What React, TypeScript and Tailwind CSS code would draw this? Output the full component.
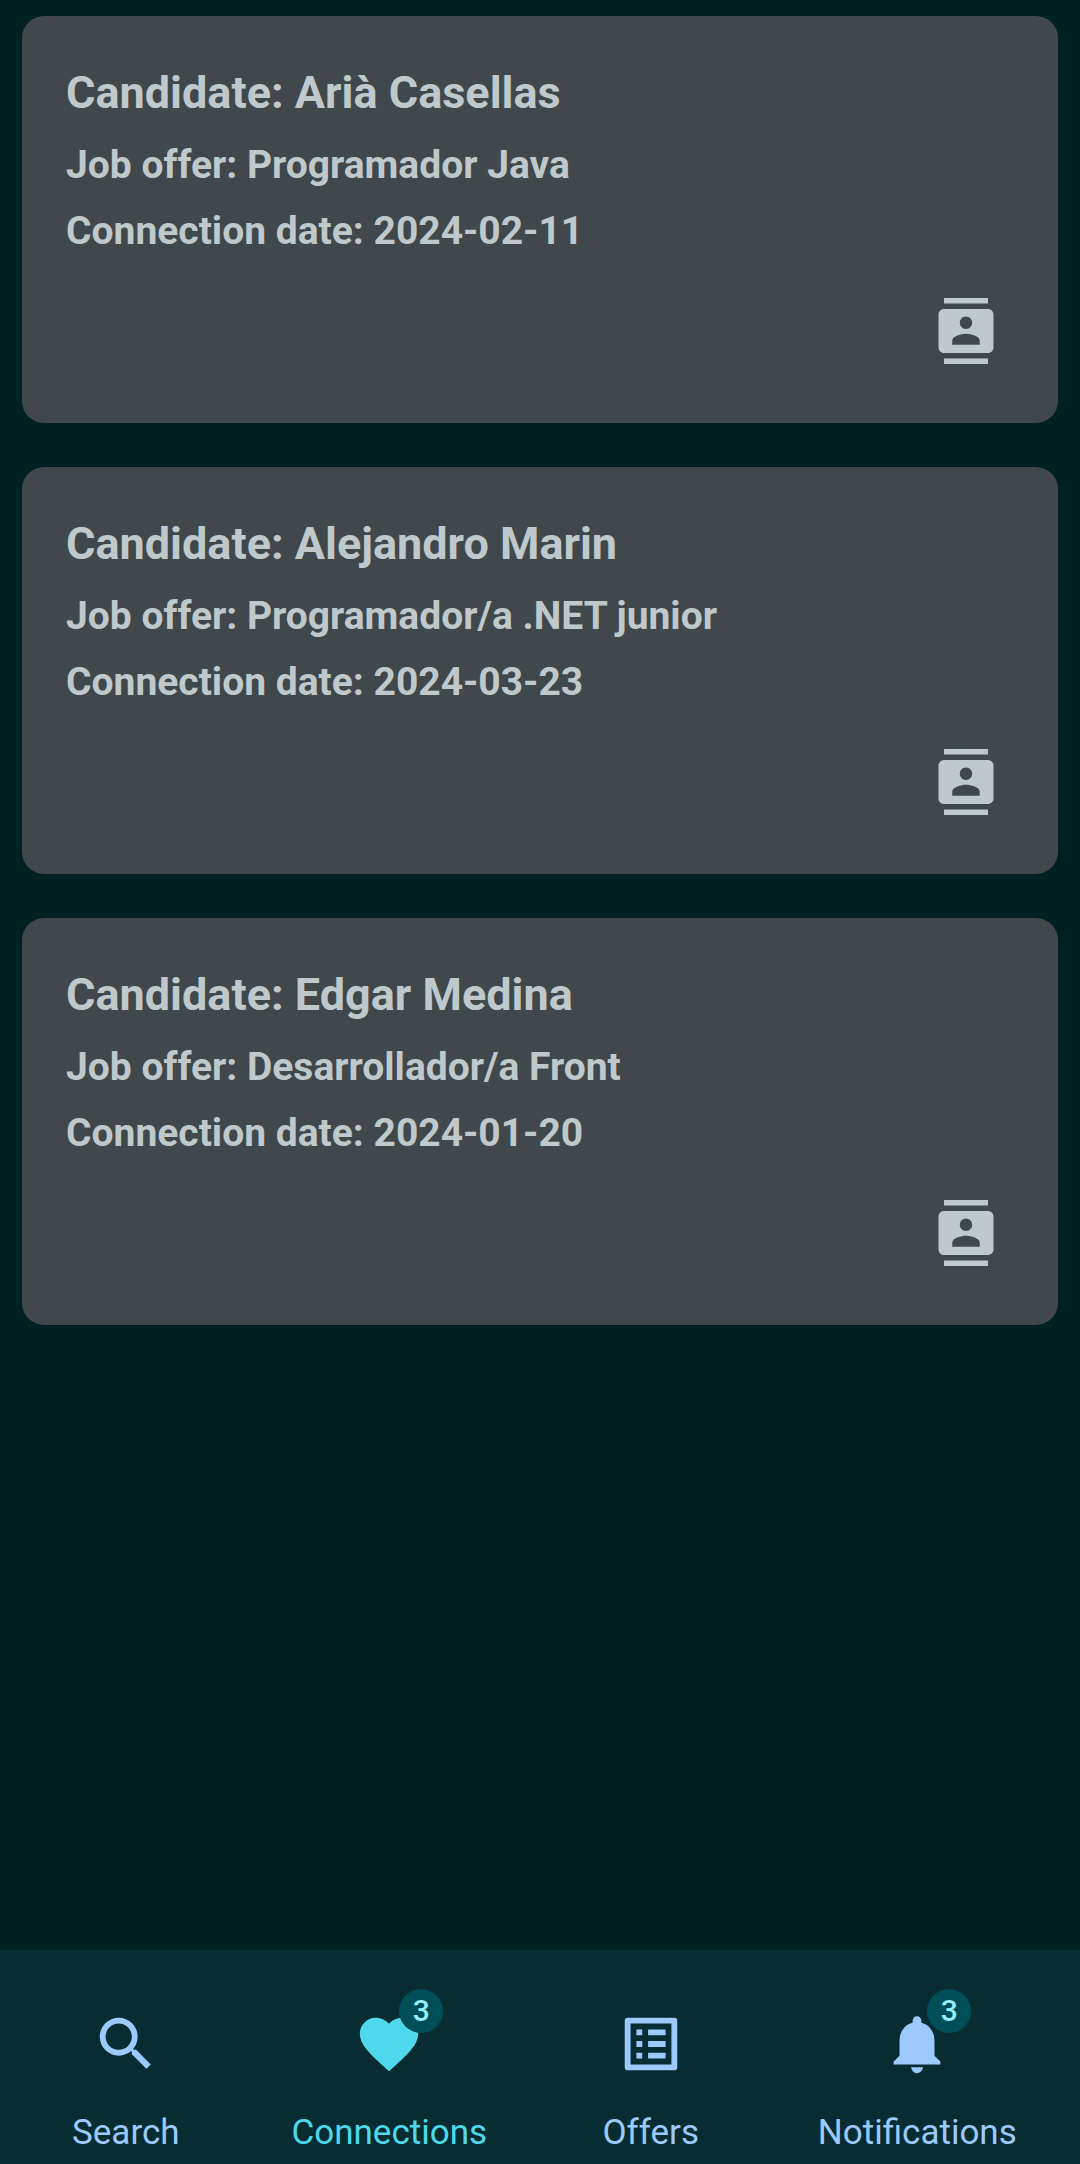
import type { IconType } from "react-icons";
import { MdContacts, MdFavorite, MdListAlt, MdNotifications, MdSearch } from "react-icons/md";

type Connection = { candidate: string; offer: string; date: string };

const connections: Connection[] = [
  { candidate: "Arià Casellas", offer: "Programador Java", date: "2024-02-11" },
  { candidate: "Alejandro Marin", offer: "Programador/a .NET junior", date: "2024-03-23" },
  { candidate: "Edgar Medina", offer: "Desarrollador/a Front", date: "2024-01-20" },
];

type Tab = { label: string; icon: IconType; badge?: number; active?: boolean };

const tabs: Tab[] = [
  { label: "Search", icon: MdSearch },
  { label: "Connections", icon: MdFavorite, badge: 3, active: true },
  { label: "Offers", icon: MdListAlt },
  { label: "Notifications", icon: MdNotifications, badge: 3 },
];

function ConnectionCard({ candidate, offer, date }: Connection) {
  return (
    <article className="flex flex-col rounded-[22px] bg-[#40484b] pt-11 pr-[26px] pb-[26px] pl-11 text-[#bfc8cb]">
      <div className="flex flex-col gap-3 font-bold">
        <h2 className="text-[45px] leading-[66px]">Candidate: {candidate}</h2>
        <p className="text-[39px] leading-[54px]">Job offer: {offer}</p>
        <p className="text-[39px] leading-[54px]">Connection date: {date}</p>
      </div>
      <button
        type="button"
        aria-label={`Contact ${candidate}`}
        className="mt-[7px] flex size-[132px] items-center justify-center self-end rounded-full"
      >
        <MdContacts className="size-[66px]" />
      </button>
    </article>
  );
}

function NavItem({ label, icon: Icon, badge, active }: Tab) {
  return (
    <button
      type="button"
      aria-current={active ? "page" : undefined}
      className={`flex flex-col items-center gap-8 ${active ? "text-[#4fd8eb]" : "text-[#9ccaff]"}`}
    >
      <span className="relative">
        <Icon className="size-[70px]" />
        {badge !== undefined && (
          <span className="absolute -top-5 left-[45px] flex size-11 items-center justify-center rounded-full bg-[#004f58] text-[30px] leading-none font-medium text-[#97f0ff]">
            {badge}
          </span>
        )}
      </span>
      <span className="text-[35px] leading-[44px]">{label}</span>
    </button>
  );
}

export default function App() {
  return (
    <div className="flex min-h-screen flex-col bg-[#002022] font-['Roboto',sans-serif]">
      <main className="flex flex-1 flex-col gap-11 px-[22px] pt-4 pb-11">
        {connections.map((c) => (
          <ConnectionCard key={c.candidate} {...c} />
        ))}
      </main>
      <nav
        aria-label="Main"
        className="grid grid-cols-[252fr_276fr_248fr_286fr] bg-[#072d32] pt-[59px] pr-5 pb-[9px]"
      >
        {tabs.map((t) => (
          <NavItem key={t.label} {...t} />
        ))}
      </nav>
    </div>
  );
}
